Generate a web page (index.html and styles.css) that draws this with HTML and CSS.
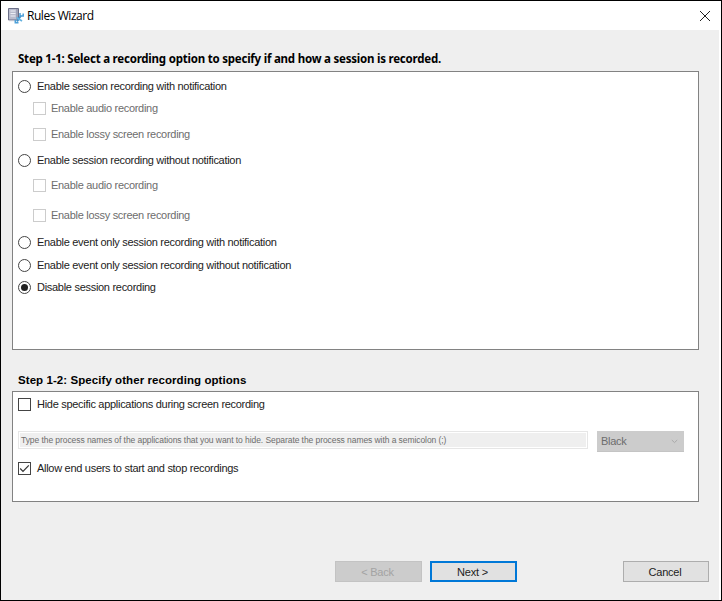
FILE: index.html
```html
<!DOCTYPE html>
<html lang="en">
<head>
    <meta charset="UTF-8">
    <meta name="viewport" content="width=device-width, initial-scale=1.0">
    <title>Rules Wizard</title>
    <link rel="stylesheet" href="styles.css">
</head>
<body>
    <div class="window">
        <header class="titlebar">
            <svg class="app-icon" width="16" height="16" viewBox="0 0 16 16">
                <path d="M.5.5h10v11.500h-10z" fill="#b9bccd" stroke="#6b6f88"/>
                <path d="M2.500 3h5M2.500 5.500h5M2.500 8h5" stroke="#eceef5"/>
                <path d="M9 1v10" stroke="#8588a0"/>
                <path d="M1 12.700h7" stroke="#c5c7d2"/>
                <path d="M9 13.500l4-6" stroke="#3d91cd" stroke-width="2"/>
                <path d="M8.500 9.500l5.500 3.500" stroke="#64b1df" stroke-width="1.600"/>
                <path d="M12 5v3h3.200V5.500M10.500 14.800H7.300v-3" fill="none" stroke="#4da0d8" stroke-width="1.500"/>
            </svg>
            <span class="title">Rules Wizard</span>
            <svg class="close" width="12" height="12" viewBox="0 0 12 12">
                <path d="M1 1l10 10M11 1L1 11" stroke="#222" stroke-width="1"/>
            </svg>
        </header>
        <main class="content">
            <h2 class="heading heading-first">Step 1-1: Select a recording option to specify if and how a session is recorded.</h2>
            <section class="panel panel-recording">
                <label class="option"><i class="radio"></i><span>Enable session recording with notification</span></label>
                <label class="option sub"><i class="check"></i><span>Enable audio recording</span></label>
                <label class="option sub"><i class="check"></i><span>Enable lossy screen recording</span></label>
                <label class="option"><i class="radio"></i><span>Enable session recording without notification</span></label>
                <label class="option sub"><i class="check"></i><span>Enable audio recording</span></label>
                <label class="option sub"><i class="check"></i><span>Enable lossy screen recording</span></label>
                <label class="option"><i class="radio"></i><span>Enable event only session recording with notification</span></label>
                <label class="option"><i class="radio"></i><span>Enable event only session recording without notification</span></label>
                <label class="option"><i class="radio selected"></i><span>Disable session recording</span></label>
            </section>
            <h2 class="heading heading-second">Step 1-2: Specify other recording options</h2>
            <section class="panel panel-other">
                <label class="option"><i class="check"></i><span>Hide specific applications during screen recording</span></label>
                <div class="hide-row">
                    <div class="process-names"><span>Type the process names of the applications that you want to hide. Separate the process names with a semicolon (;)</span></div>
                    <div class="color-select">
                        <span>Black</span>
                        <svg width="7" height="5" viewBox="0 0 7 5"><path d="M.8 1l2.700 2.600L6.200 1" fill="none" stroke="#aaa"/></svg>
                    </div>
                </div>
                <label class="option">
                    <i class="check"><svg width="11" height="11" viewBox="0 0 11 11"><path d="M1.200 5.500l2.800 2.800 5.800-6" fill="none" stroke="#333" stroke-width="1.200"/></svg></i>
                    <span>Allow end users to start and stop recordings</span>
                </label>
            </section>
            <footer class="buttons">
                <button class="btn back" disabled>&lt; Back</button>
                <button class="btn next">Next &gt;</button>
                <button class="btn cancel">Cancel</button>
            </footer>
        </main>
    </div>
</body>
</html>
```
FILE: styles.css
```css
* {
    box-sizing: border-box;
}
body {
    margin: 0;
    font-family: "Liberation Sans", Arial, sans-serif;
    font-size: 11px;
    letter-spacing: -0.29px;
    color: #222;
}
.window {
    width: 722px;
    height: 601px;
    border: 1px solid #000;
    background: #fff;
}
.titlebar {
    display: flex;
    align-items: center;
    height: 29px;
    padding: 0 10px 0 7px;
}
.title {
    margin-left: 3px;
    font-family: "Open Sans", "Noto Sans", sans-serif;
    font-size: 12px;
    letter-spacing: -0.45px;
    color: #000;
}
.close {
    margin-left: auto;
}
.content {
    height: 570px;
    margin-right: 2px;
    padding: 20px 20px 0 11px;
    background: #efefef;
}
.heading {
    height: 21px;
    margin: 0 0 0 6px;
    white-space: nowrap;
    color: #000;
}
.heading-first {
    font: bold 11.5px/18px "Noto Sans", sans-serif;
    letter-spacing: -0.22px;
}
.heading-second {
    margin-top: 20px;
    font-size: 11.5px;
    line-height: 20px;
    letter-spacing: 0.07px;
}
.panel {
    border: 1px solid #828282;
    background: #fff;
    padding-left: 5px;
}
.panel-recording {
    height: 279px;
    padding-top: 7px;
}
.panel-other {
    height: 111px;
    padding-top: 5px;
}
.option {
    display: flex;
    align-items: center;
    height: 14px;
    white-space: nowrap;
}
.panel-recording .option + .option {
    margin-top: 9px;
}
.panel-recording .option.sub {
    margin-left: 15px;
    margin-top: 8px;
    color: #6d6d6d;
}
.panel-recording .sub + .option {
    margin-top: 12px;
}
.panel-recording .option.sub:nth-child(3) {
    margin-top: 12px;
}
.panel-recording .option.sub:nth-child(5) {
    margin-top: 11px;
}
.panel-recording .option.sub:nth-child(6) {
    margin-top: 16px;
}
.panel-recording .option:nth-child(7) {
    margin-top: 13px;
}
.panel-recording .option:nth-child(9) {
    margin-top: 8px;
}
.option span {
    margin-left: 6px;
}
.option.sub span {
    margin-left: 5px;
}
.radio,
.check {
    display: flex;
    flex: none;
    align-items: center;
    justify-content: center;
    width: 13px;
    height: 13px;
    border: 1px solid #444;
    background: #fff;
}
.radio {
    border-radius: 50%;
}
.selected::after {
    content: "";
    width: 7px;
    height: 7px;
    border-radius: 50%;
    background: #222;
}
.sub .check {
    border-color: #ccc;
}
.hide-row {
    display: flex;
    margin: 20px 0 12px;
}
.process-names {
    width: 570px;
    height: 18px;
    padding: 1px;
    border: 1px solid #e6e6e6;
}
.process-names span {
    display: block;
    height: 14px;
    padding-left: 1px;
    background: #efefef;
    font-size: 8.5px;
    line-height: 14px;
    letter-spacing: -0.07px;
    white-space: nowrap;
    color: #6d6d6d;
}
.color-select {
    display: flex;
    align-items: center;
    justify-content: space-between;
    width: 87px;
    height: 21px;
    margin: 0 0 -3px 9px;
    padding: 0 6px 0 4px;
    background: #ccc;
    border-bottom: 1px solid #c4c4c4;
    color: #6d6d6d;
}
.buttons {
    display: flex;
    justify-content: flex-end;
    margin: 59px -10px 0 0;
}
.btn {
    width: 87px;
    height: 21px;
    padding: 0 2px 0 0;
    border: 1px solid #adadad;
    background: #e1e1e1;
    font: 11px "Liberation Sans", Arial, sans-serif;
    letter-spacing: -0.2px;
    color: #222;
}
.back {
    border-color: #c3c3c3;
    background: #ccc;
    color: #a3a3a3;
}
.next {
    margin: 0 106px 0 8px;
    border: 2px solid #0078d7;
}
.cancel {
    width: 86px;
}
```
